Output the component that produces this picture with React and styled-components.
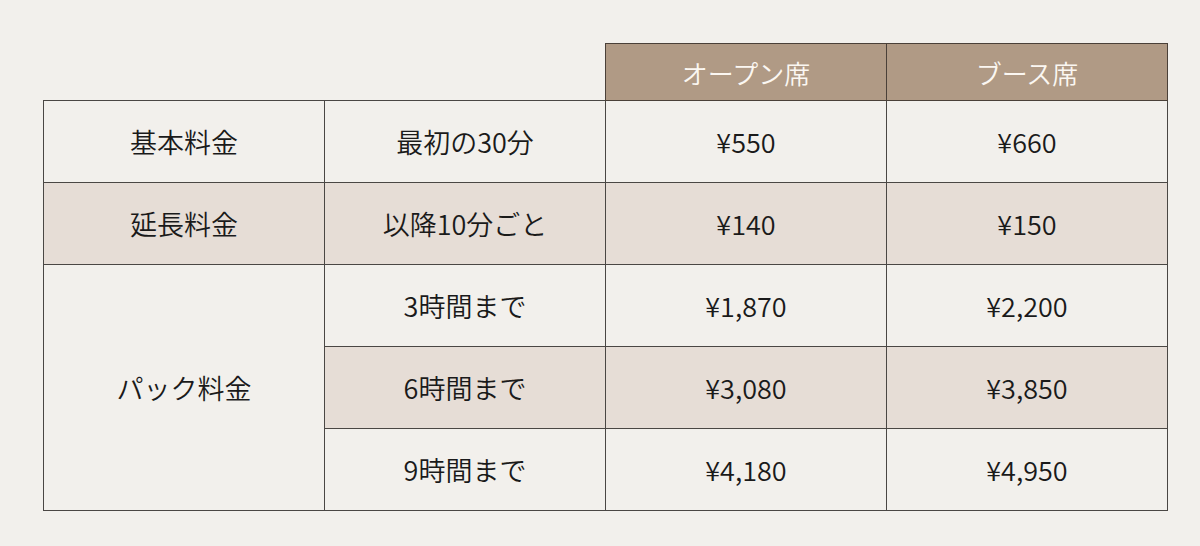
import React from "react";
import styled, { createGlobalStyle } from "styled-components";

const GlobalStyle = createGlobalStyle`
  html, body {
    margin: 0;
    padding: 0;
    background: #f2f0ec;
  }
  body {
    font-family: "Noto Sans CJK JP", "Noto Sans", sans-serif;
    color: #1a1a1a;
  }
`;

const Page = styled.div`
  width: 1200px;
  height: 546px;
  padding: 43px 0 0 43px;
  box-sizing: border-box;
`;

const Table = styled.table`
  border-collapse: collapse;
  table-layout: fixed;
  width: 1124px;
`;

const Col = styled.col`
  width: 281px;
`;

const HeadRow = styled.tr`
  height: 57px;
`;

const Row = styled.tr`
  height: 82px;
  background: ${(p) => (p.$shaded ? "#e6ddd6" : "#f2f0ec")};
`;

const Blank = styled.th`
  border: none;
  background: transparent;
`;

const HeadCell = styled.th`
  background: #b09a85;
  color: #fbf7f2;
  font-weight: 350;
  font-size: 26px;
  border: 1px solid #4a4038;
  padding: 0;
  text-align: center;
  vertical-align: middle;
`;

const Cell = styled.td`
  border: 1px solid #4a4744;
  font-size: 27px;
  font-weight: 350;
  text-align: center;
  vertical-align: middle;
  padding: 0;
  background: ${(p) => (p.$plain ? "#f2f0ec" : "inherit")};
`;

const rows = [
  { label: "基本料金", unit: "最初の30分", open: "¥550", booth: "¥660" },
  { label: "延長料金", unit: "以降10分ごと", open: "¥140", booth: "¥150", shaded: true },
];

const packs = [
  { unit: "3時間まで", open: "¥1,870", booth: "¥2,200" },
  { unit: "6時間まで", open: "¥3,080", booth: "¥3,850", shaded: true },
  { unit: "9時間まで", open: "¥4,180", booth: "¥4,950" },
];

export default function App() {
  return (
    <>
      <GlobalStyle />
      <Page>
        <Table>
          <colgroup>
            <Col />
            <Col />
            <Col />
            <Col />
          </colgroup>
          <thead>
            <HeadRow>
              <Blank />
              <Blank />
              <HeadCell>オープン席</HeadCell>
              <HeadCell>ブース席</HeadCell>
            </HeadRow>
          </thead>
          <tbody>
            {rows.map((r) => (
              <Row key={r.label} $shaded={r.shaded}>
                <Cell>{r.label}</Cell>
                <Cell>{r.unit}</Cell>
                <Cell>{r.open}</Cell>
                <Cell>{r.booth}</Cell>
              </Row>
            ))}
            {packs.map((p, i) => (
              <Row key={p.unit} $shaded={p.shaded}>
                {i === 0 && (
                  <Cell rowSpan={3} $plain>
                    パック料金
                  </Cell>
                )}
                <Cell>{p.unit}</Cell>
                <Cell>{p.open}</Cell>
                <Cell>{p.booth}</Cell>
              </Row>
            ))}
          </tbody>
        </Table>
      </Page>
    </>
  );
}
